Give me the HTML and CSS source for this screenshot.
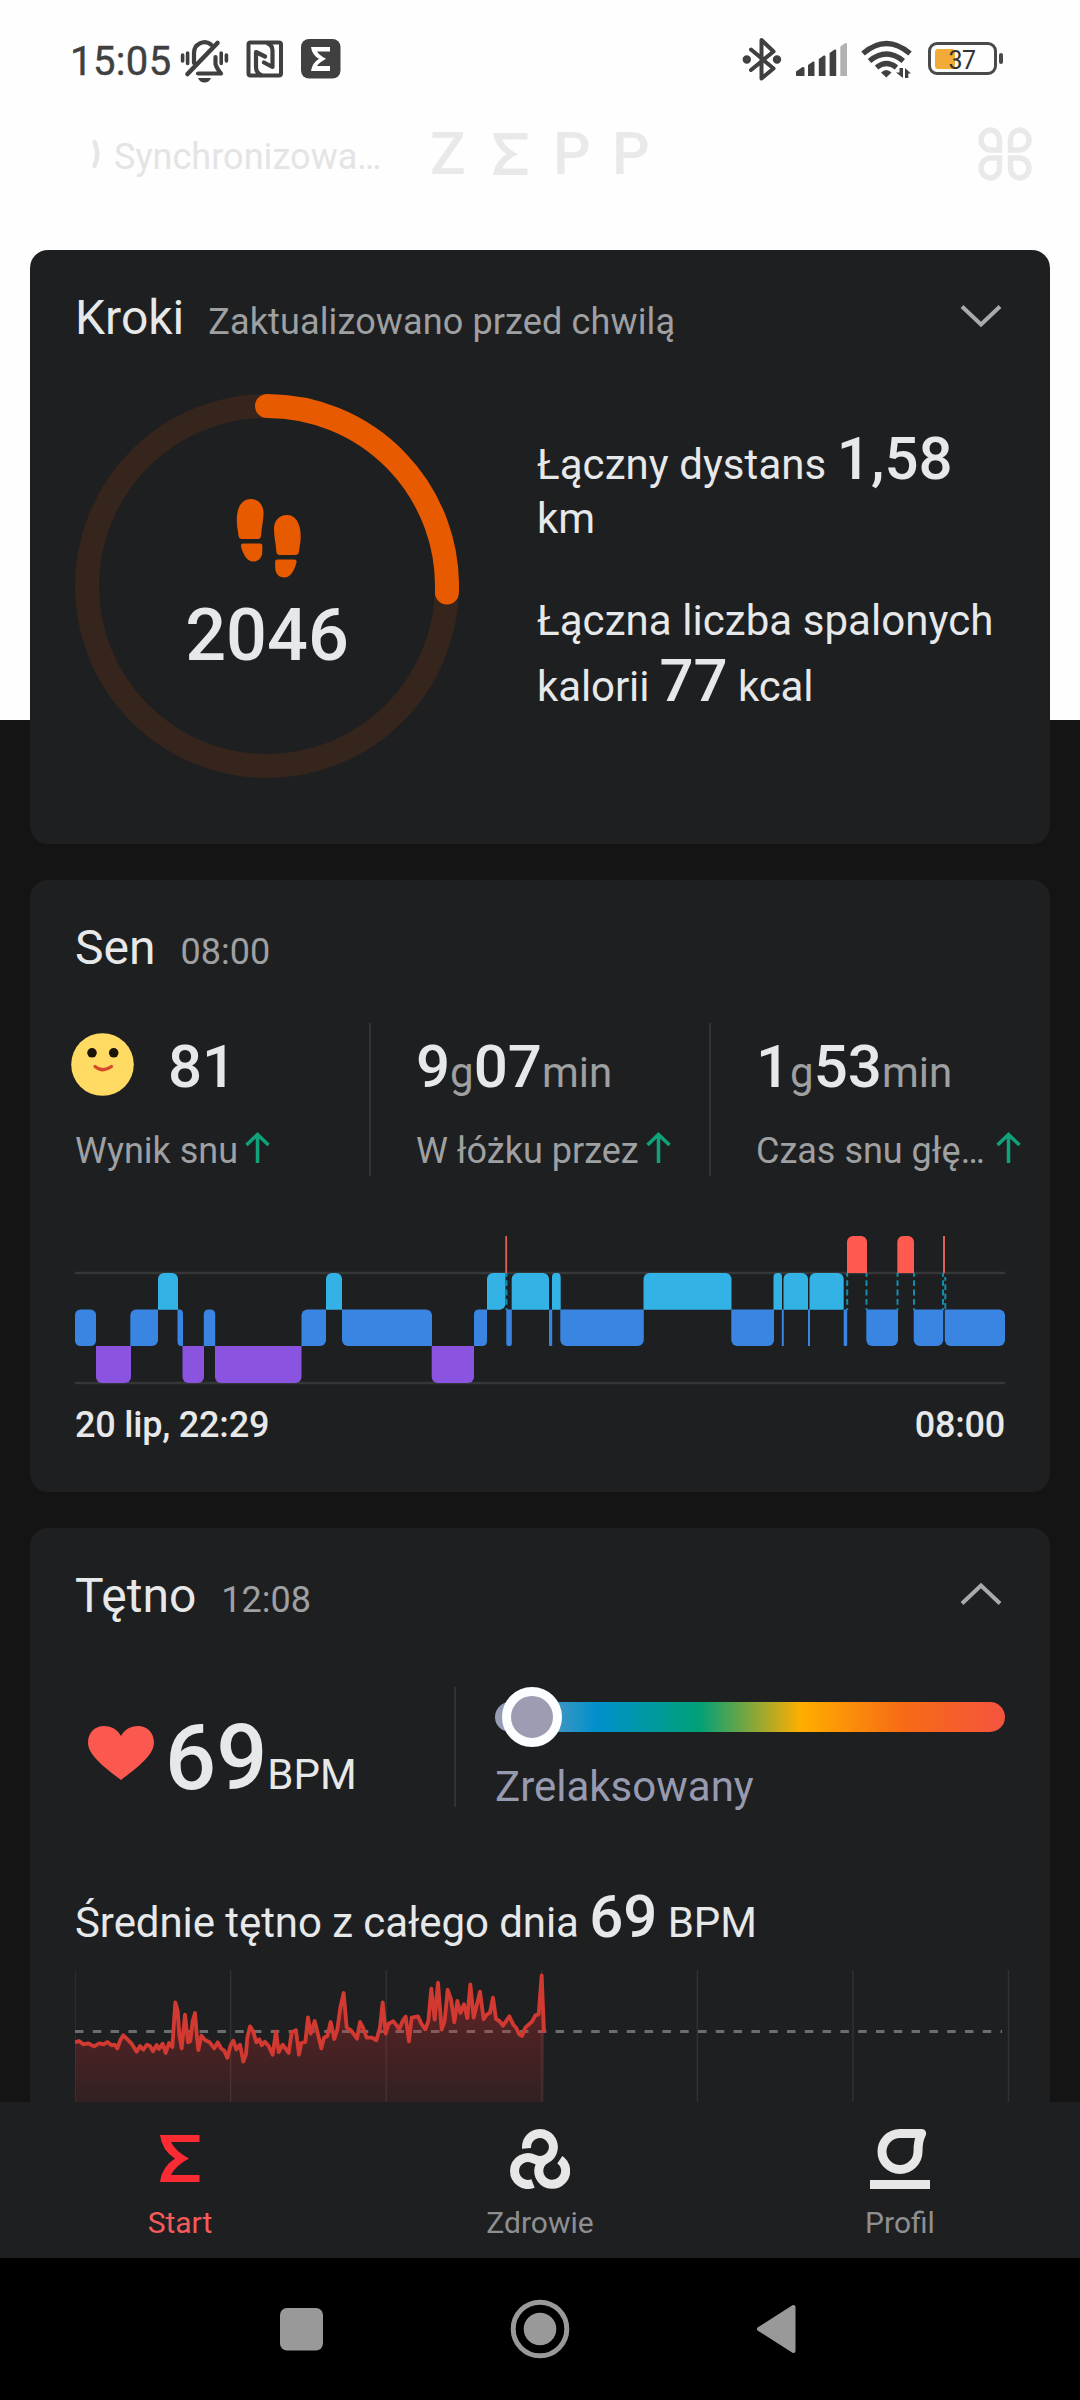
FILE: index.html
```html
<!DOCTYPE html>
<html lang="pl">
<head>
<meta charset="utf-8">
<title>Zepp</title>
<link rel="stylesheet" href="styles.css">
</head>
<body>
<div class="phone">
  <div class="status">
    <span class="clock">15:05</span>
    <svg class="ic-bell" width="50" height="46" viewBox="180 37 50 46" fill="none" stroke="#404040" stroke-width="3.6" stroke-linecap="round" stroke-linejoin="round">
      <path d="M182.6 55v6M187.6 53v10.500M226.400 55v6M221.200 53v10.500"/>
      <path stroke-width="4.200" d="M194 63V53a10.500 10.500 0 0 1 17-8.500M215.500 57v7q1 4 5.500 9.500h-23"/>
      <path stroke-width="4.600" d="M187.500 74L217.500 43"/>
      <path fill="#404040" stroke="none" d="M198 78h13q-2 4.500-6.500 4.500T198 78z"/>
    </svg>
    <svg class="ic-nfc" width="38" height="38" viewBox="0 0 38 38" fill="none" stroke="#404040" stroke-width="4" stroke-linejoin="round">
      <rect x="2.500" y="2.500" width="32.500" height="33" rx="2"/>
      <path stroke-width="4.200" stroke-linecap="round" d="M15 35q-5-2-5-8V12l9 4.500M22 3.500q4.500 2 4.500 7V27l-8.500-4.500"/>
    </svg>
    <svg class="ic-zepp" width="40" height="40" viewBox="0 0 40 40">
      <rect width="39.500" height="39.500" rx="8" fill="#404040"/>
      <path fill="#fff" d="M10 8h19v4.500H16q2 3.500 9 7.300-7 3.800-9 7.300h13v5H10q1-8 8-12.300Q11 16 10 8z"/>
    </svg>
    <span class="grow"></span>
    <svg width="40" height="44" viewBox="742 36 40 44" fill="none" stroke="#404040" stroke-width="4" stroke-linejoin="round" stroke-linecap="round">
      <path d="M751 48.500L773.500 67.500 761.500 77.500V39L773.500 50.500 751 69"/>
      <circle cx="746.800" cy="58.500" r="2.200"/><circle cx="777" cy="58.500" r="2.200"/>
    </svg>
    <svg class="ic-signal" width="53" height="36" viewBox="795 41 53 36" fill="#404040">
      <path d="M796 71.500l6.500-4.500q2 0 2 1V76H797q-1 0-1-1z"/><path d="M808 65l5-3.500q1.500-.5 1.500 1V76H808z"/><path d="M818.800 59l5-3.500q1.700-.5 1.700 1V76h-6.700z"/><path d="M829.600 53l5-3.500q1.600-.5 1.600 1V76h-6.600z"/><path fill="#b2b2b2" d="M840.300 46.500l5-3.500q1.700-.5 1.700 1V76h-6.700z"/>
    </svg>
    <svg class="ic-wifi" width="52" height="40" viewBox="860 39 52 40" fill="none" stroke="#404040" stroke-width="5.300">
      <path d="M863 53.500Q886.400 33.500 910 53.500"/><path d="M869.500 61Q886.400 47 903.300 61"/><path d="M876.500 67.500Q886.400 59.500 896.500 67.500"/>
      <path fill="#404040" stroke="none" d="M881 72.500q5.400-5 10.500 0l-5.200 5z"/>
      <path fill="#404040" stroke="none" d="M899.500 68h3.500v10l-7-5.500h3.500zM905 78h3.300v-4.500h2.700L905 68z"/>
    </svg>
    <div class="battery"><i></i><b>37</b></div><span class="nub"></span>
  </div>

  <div class="appbar">
    <div class="sync">
      <svg width="12" height="30" viewBox="0 0 12 30" fill="none" stroke="#e6e6e6" stroke-width="4.500" stroke-linecap="round"><path d="M3.500 3q5.500 12 0 24"/></svg>
      <span>Synchronizowa…</span>
    </div>
    <div class="logo">
      <span>Z</span>
      <svg width="35" height="42" viewBox="0 0 35 42" fill="#e9e9e9"><path d="M0 0h34.500v6.500H9q5 9.500 16 14.500Q14 26 9 35.500h25.500V42H0q2-14 13.500-21Q2 14 0 0z"/></svg>
      <span>P</span><span>P</span>
    </div>
    <svg width="54" height="54" viewBox="0 0 54 54" fill="none" stroke="#e9e9e9" stroke-width="5.500">
      <path id="petal" d="M13 3a10 10 0 1 0 0 20h8.500V13A9.500 10 0 0 0 13 3z"/>
      <use href="#petal" transform="translate(54 0) scale(-1 1)"/>
      <use href="#petal" transform="translate(0 54) scale(1 -1)"/>
      <use href="#petal" transform="translate(54 54) scale(-1 -1)"/>
    </svg>
  </div>

  <main>
    <section class="card steps">
      <header>
        <h2>Kroki</h2><small class="updated">Zaktualizowano przed chwilą</small>
        <svg class="chev" width="48" height="30" viewBox="0 0 48 30"><path d="M5 5.500L24 23.500 43 5.500"/></svg>
      </header>
      <div class="steps-body">
        <div class="ring">
          <svg class="ring-arc" width="384" height="384" viewBox="0 0 384 384" fill="none" stroke-width="24">
            <circle cx="192" cy="192" r="180" stroke="#36251d"/>
            <path d="M192 12A180 180 0 0 1 371.900 198.500" stroke="#e85a00" stroke-linecap="round"/>
          </svg>
          <svg class="feet" width="66" height="80" viewBox="0 0 66 80" fill="#e85a00">
            <path id="foot" d="M14.500 0C22 0 28 5.500 27.500 15 27 25 25.500 29 25.200 36q-.2 4-3.500 4H6Q3 40 2.600 37C1.800 31 .8 27 .8 21 .8 8 6 0 14.500 0z"/>
            <path id="heel" d="M7 44.600h17q2.300 0 2.300 2v6c0 6-3.500 10-9 10-6.500 0-10.600-8-12.300-15.300q-.5-2.700 2-2.700z"/>
            <use href="#foot" transform="translate(65.500 16) scale(-1 1)"/>
            <use href="#heel" transform="translate(65.500 16) scale(-1 1)"/>
          </svg>
          <div class="count">2046</div>
        </div>
        <div class="totals">
          <div class="big-line">Łączny dystans <b>1,58</b></div>
          <div class="line">km</div>
          <div class="line second">Łączna liczba spalonych</div>
          <div class="big-line kcal">kalorii <b>77</b> kcal</div>
        </div>
      </div>
    </section>

    <section class="card sleep">
      <header><h2>Sen</h2><small>08:00</small></header>
      <div class="metrics">
        <div class="metric score">
          <div class="value">
            <svg width="63" height="63" viewBox="0 0 63 63"><circle cx="31.500" cy="31.500" r="31.300" fill="#ffdb63"/><circle cx="21" cy="19.800" r="4.800" fill="#1b1508"/><circle cx="42.700" cy="19.800" r="4.800" fill="#1b1508"/><path d="M24 33.500q7.800 6.500 16.500 0" fill="none" stroke="#d44a2a" stroke-width="3.200" stroke-linecap="round"/></svg>
            <b>81</b>
          </div>
          <div class="label"><span>Wynik snu</span><svg class="up" width="25" height="32" viewBox="0 0 25 32"><path d="M12.500 31V3M1.500 13L12.500 2.500 23.500 13"/></svg></div>
        </div>
        <div class="metric">
          <div class="value-line"><b>9</b>g<b>07</b>min</div>
          <div class="label"><span>W łóżku przez</span><svg class="up" width="25" height="32" viewBox="0 0 25 32"><path d="M12.500 31V3M1.500 13L12.500 2.500 23.500 13"/></svg></div>
        </div>
        <div class="metric deep">
          <div class="value-line"><b>1</b>g<b>53</b>min</div>
          <div class="label"><span>Czas snu głę…</span><svg class="up" width="25" height="32" viewBox="0 0 25 32"><path d="M12.500 31V3M1.500 13L12.500 2.500 23.500 13"/></svg></div>
        </div>
      </div>
      <svg class="stages" width="930" height="160" viewBox="75 1230 930 160">
        <path d="M75 1273H1005M75 1383H1005" stroke="#353638" stroke-width="2.500"/>
        <g fill="#8a54e0">
          <path d="M96 1346h35v31a6 6 0 0 1-6 6h-23a6 6 0 0 1-6-6z"/><path d="M182.500 1346H204v31a6 6 0 0 1-6 6h-9.500a6 6 0 0 1-6-6z"/><path d="M215 1346h86.500v31a6 6 0 0 1-6 6H221a6 6 0 0 1-6-6z"/><path d="M431.700 1346H474v31a6 6 0 0 1-6 6h-30.300a6 6 0 0 1-6-6z"/>
        </g>
        <g fill="#3a85e2">
          <rect x="75" y="1309.500" width="21" height="36.500" rx="5.500"/>
          <path d="M136 1309.500h22V1340a6 6 0 0 1-6 6h-21.700v-30.500a6 6 0 0 1 5.700-6z"/>
          <path d="M177.500 1309.500h2.500q3 0 3 5V1346h-2q-3.500 0-3.500-5z"/>
          <path d="M208.800 1309.500h1.400q5 0 5 5V1346h-11.400v-31.500q0-5 5-5z"/>
          <path d="M307.500 1309.500H326V1340a6 6 0 0 1-6 6h-18.500v-30.500a6 6 0 0 1 6-6z"/>
          <path d="M342 1309.500h84a6 6 0 0 1 6 6V1346h-84a6 6 0 0 1-6-6z"/>
          <path d="M479 1309.500h8V1341q0 5-5 5h-8v-31.500q0-5 5-5z"/>
          <path d="M506.300 1309.500h5.500V1344q0 2-2 2h-1.500q-2 0-2-2z"/>
          <rect x="549" y="1309.500" width="3.200" height="36.500" rx="1"/>
          <path d="M560.300 1309.500h83.500V1340a6 6 0 0 1-6 6h-71.500a6 6 0 0 1-6-6z"/>
          <path d="M731.300 1309.500H774V1340a6 6 0 0 1-6 6h-30.700a6 6 0 0 1-6-6z"/>
          <path d="M781.800 1309.500h2v36.500h-2zM808 1309.500h2v36.500h-2z"/>
          <rect x="843.700" y="1309.500" width="3.500" height="36.500" rx="1"/>
          <path d="M866.300 1309.500H898V1340a6 6 0 0 1-6 6h-19.700a6 6 0 0 1-6-6z"/>
          <path d="M913.700 1309.500h29.500V1340a6 6 0 0 1-6 6h-17.500a6 6 0 0 1-6-6z"/>
          <path d="M944.800 1309.500H999a6 6 0 0 1 6 6V1340a6 6 0 0 1-6 6h-48.200a6 6 0 0 1-6-6z"/>
        </g>
        <g fill="#33b2e5">
          <path d="M164 1273h8a6 6 0 0 1 6 6v30.700h-20V1279a6 6 0 0 1 6-6z"/>
          <path d="M332 1273h4a6 6 0 0 1 6 6v30.700h-16V1279a6 6 0 0 1 6-6z"/>
          <path d="M493 1273h12.500v30.700a6 6 0 0 1-6 6H487V1279a6 6 0 0 1 6-6z"/>
          <path d="M517.700 1273H543a6 6 0 0 1 6 6v30.700h-37.300V1279a6 6 0 0 1 6-6z"/>
          <path d="M555.500 1273h2q3.200 0 3.200 5v31.700h-8.700V1277q0-4 3.500-4z"/>
          <path d="M649.500 1273h76a6 6 0 0 1 6 6v30.700h-88V1279a6 6 0 0 1 6-6z"/>
          <path d="M777.500 1273h1.500q3 0 3 4v32.700h-8.500V1277q0-4 4-4z"/>
          <path d="M789.500 1273H802a6 6 0 0 1 6 6v30.700h-24.500V1279a6 6 0 0 1 6-6z"/>
          <path d="M815.500 1273h22.200a6 6 0 0 1 6 6v30.700h-34.200V1279a6 6 0 0 1 6-6z"/>
        </g>
        <g fill="#ff5950">
          <path d="M853 1236h8a6 6 0 0 1 6 6v31h-20v-31a6 6 0 0 1 6-6z"/><path d="M903 1236h5a6 6 0 0 1 6 6v31h-16.700v-31a6 6 0 0 1 5.700-6z"/>
          <path fill="#dc6258" d="M505.300 1236h1.800v37h-1.800zM943 1236h2v37h-2z"/>
        </g>
        <path d="M506.500 1273v37M847.200 1273v37M866.500 1273v37M897.500 1273v37M914 1273v37M943 1273v37M945.300 1277v33" stroke="#148cac" stroke-width="2" stroke-dasharray="5.800 3.500" stroke-dashoffset="2"/>
      </svg>
      <div class="times"><span>20 lip, 22:29</span><span>08:00</span></div>
    </section>

    <section class="card heart">
      <header>
        <h2>Tętno</h2><small>12:08</small>
        <svg class="chev" width="48" height="30" viewBox="0 0 48 30"><path d="M5 24.500L24 6.500 43 24.500"/></svg>
      </header>
      <div class="pulse">
        <div class="now">
          <svg width="66" height="54" viewBox="0 0 66 54" fill="#fb5850"><path d="M33 54C22 45 0 31 0 16.500 0 6.500 7 0 16 0c7.500 0 13.500 3.500 17 10C36.500 3.500 42.500 0 50 0c9 0 16 6.500 16 16.500C66 31 44 45 33 54z"/></svg>
          <div class="bpm"><b>69</b>BPM</div>
        </div>
        <div class="zone">
          <div class="scale"><i></i></div>
          <div class="zone-name">Zrelaksowany</div>
        </div>
      </div>
      <div class="big-line average">Średnie tętno z całego dnia <b>69</b> BPM</div>
      <svg class="trend" width="940" height="133" viewBox="75 1968 940 133">
        <defs><linearGradient id="area" gradientUnits="userSpaceOnUse" x1="0" y1="300" x2="0" y2="695"><stop offset="0" stop-color="#cc2b2b" stop-opacity=".42"/><stop offset="1" stop-color="#cc2b2b" stop-opacity=".11"/></linearGradient></defs>
        <path d="M75 1969v132M230.600 1969v132M386.200 1969v132M541.700 1969v132M697.300 1969v132M853 1969v132M1008.500 1969v132" stroke="#303234" stroke-width="1.500"/>
        <path d="M75 2030.500H1002" stroke="#6c6d6f" stroke-width="3" stroke-dasharray="8.500 9.300"/>
        <g transform="translate(60 1870) scale(.33333)">
          <path fill="url(#area)" d="M45 514L57 510 70 520 85 517 102 526 118 517 131 520 142 513 155 523 164 521 172 532 181 507 190 493 200 503 214 517 230 542 240 525 250 536 261 521 270 525 279 541 290 522 297 534 308 518 317 546 327 516 337 528 346 394 353 420 358 490 365 532 375 431 384 514 391 510 398 450 405 426 411 500 415 537 424 494 436 508 449 514 463 532 473 514 484 533 492 538 502 560 512 522 520 509 529 535 540 521 550 572 558 550 562 500 570 466 579 480 589 514 598 505 605 523 614 512 626 525 638 551 648 481 656 543 668 521 676 532 686 546 695 484 708 478 717 551 724 516 736 513 744 439 752 488 764 450 773 486 784 532 792 500 802 495 812 453 823 504 832 475 841 410 851 366 860 470 873 478 891 503 900 453 909 470 920 500 936 500 949 508 960 470 968 394 977 488 986 458 1000 451 1018 474 1028 450 1037 437 1047 511 1055 440 1074 436 1084 458 1096 475 1105 450 1114 353 1124 446 1134 335 1145 476 1154 450 1163 356 1173 385 1183 454 1192 390 1201 426 1212 400 1222 441 1231 340 1241 440 1251 400 1260 362 1271 445 1280 431 1290 425 1299 380 1308 444 1318 450 1329 464 1348 436 1360 461 1368 470 1378 490 1386 495 1396 470 1416 452 1426 433 1436 430 1445 313 1452 485V695H45z"/>
          <path fill="none" stroke="#d23a31" stroke-width="11.500" stroke-linejoin="round" d="M45 514L57 510 70 520 85 517 102 526 118 517 131 520 142 513 155 523 164 521 172 532 181 507 190 493 200 503 214 517 230 542 240 525 250 536 261 521 270 525 279 541 290 522 297 534 308 518 317 546 327 516 337 528 346 394 353 420 358 490 365 532 375 431 384 514 391 510 398 450 405 426 411 500 415 537 424 494 436 508 449 514 463 532 473 514 484 533 492 538 502 560 512 522 520 509 529 535 540 521 550 572 558 550 562 500 570 466 579 480 589 514 598 505 605 523 614 512 626 525 638 551 648 481 656 543 668 521 676 532 686 546 695 484 708 478 717 551 724 516 736 513 744 439 752 488 764 450 773 486 784 532 792 500 802 495 812 453 823 504 832 475 841 410 851 366 860 470 873 478 891 503 900 453 909 470 920 500 936 500 949 508 960 470 968 394 977 488 986 458 1000 451 1018 474 1028 450 1037 437 1047 511 1055 440 1074 436 1084 458 1096 475 1105 450 1114 353 1124 446 1134 335 1145 476 1154 450 1163 356 1173 385 1183 454 1192 390 1201 426 1212 400 1222 441 1231 340 1241 440 1251 400 1260 362 1271 445 1280 431 1290 425 1299 380 1308 444 1318 450 1329 464 1348 436 1360 461 1368 470 1378 490 1386 495 1396 470 1416 452 1426 433 1436 430 1445 313 1452 485"/>
        </g>
      </svg>
    </section>
  </main>

  <nav class="tabs">
    <a class="active"><svg width="60" height="60" viewBox="0 0 60 60" fill="#fb2b33"><path d="M10 6h39.500v7H21q4 9 18 16.500Q25 37 21 46h28.500v7H10q2-15.500 15-23.500Q12 21.500 10 6z"/></svg><span>Start</span></a>
    <a><svg width="60" height="60" viewBox="0 0 180 180" fill="none" stroke="#e7e7e8" stroke-width="27"><path d="M49.700 58A40.300 40.300 0 1 1 108 90A40.300 40.300 0 1 0 149.500 92.500"/><path d="M69 163.500A40.300 40.300 0 1 1 72 90A40.300 40.300 0 0 0 108 90"/></svg><span>Zdrowie</span></a>
    <a><svg width="60" height="60" viewBox="0 0 180 180"><path d="M155 13.500H90A54 54 0 1 0 144 68C144 45 147 28 155 13.500z" fill="none" stroke="#e7e7e8" stroke-width="27" stroke-linejoin="round"/><path d="M0 153h180v27H0z" fill="#e7e7e8"/></svg><span>Profil</span></a>
  </nav>

  <div class="sysnav">
    <svg width="44" height="43" viewBox="0 0 44 43"><rect width="43" height="42.500" rx="7" fill="#999"/></svg>
    <svg width="60" height="60" viewBox="0 0 60 60"><circle cx="30" cy="30" r="26.800" fill="none" stroke="#999" stroke-width="5"/><circle cx="30" cy="30" r="16.300" fill="#999"/></svg>
    <svg width="41" height="50" viewBox="0 0 41 50"><path d="M37.500 3v44L3 25z" fill="#999" stroke="#999" stroke-width="4" stroke-linejoin="round"/></svg>
  </div>
</div>
</body>
</html>
```

FILE: styles.css
```css
* { box-sizing: border-box; }
body { margin: 0; font-family: Roboto, "Liberation Sans", sans-serif; }
b { font-weight: 500; }
svg { display: block; flex: none; }

.phone {
  width: 1080px;
  height: 2400px;
  display: flex;
  flex-direction: column;
  overflow: hidden;
  background: linear-gradient(#fefefe 720px, #141414 720px);
}

/* status bar */
.status {
  height: 117px;
  display: flex;
  align-items: center;
  padding: 0 77px 0 70px;
  color: #404040;
}
.clock { font-size: 40px; line-height: 50px; padding-top: 6px; width: 110px; white-space: nowrap; letter-spacing: .4px; -webkit-text-stroke: .4px #404040; }
.ic-bell { margin-top: 3px; }
.ic-nfc { margin-left: 16px; }
.ic-zepp { margin-left: 17px; }
.grow { flex: 1; }
.ic-signal { margin-left: 13px; }
.ic-wifi { margin-left: 12px; }
.battery {
  width: 69px;
  height: 33px;
  margin-left: 16px;
  border: 3.500px solid #4a4a4a;
  border-radius: 9px;
  display: flex;
  align-items: center;
  padding-left: 3.500px;
}
.battery i { width: 20px; height: 20px; border-radius: 3px; background: #f3ab38; }
.battery b { font-size: 25px; line-height: 30px; font-weight: 400; margin: 4px 0 0 -6px; color: #333; letter-spacing: -.5px; }
.nub { width: 4px; height: 11px; border-radius: 2px; margin-left: 2px; background: #4a4a4a; }

/* app bar */
.appbar {
  height: 73px;
  display: grid;
  grid-template-columns: 341px 546px auto;
  align-items: center;
  padding-left: 91px;
}
.sync { display: flex; align-items: center; gap: 11px; font-size: 36px; color: #e4e4e4; letter-spacing: .05px; }
.sync span { padding-top: 7px; }
.logo { display: flex; align-items: center; color: #e9e9e9; font-size: 59px; line-height: 60px; font-weight: 500; padding-top: 1px; }
.logo span:first-child { width: 61px; text-indent: -2px; }
.logo svg { margin-right: 25px; }
.logo span + span, .logo svg + span { width: 59px; }

/* cards */
main {
  flex: 1;
  min-height: 0;
  overflow: hidden;
  padding: 60px 30px 0;
  display: flex;
  flex-direction: column;
  gap: 36px;
}
.card {
  flex: none;
  border-radius: 18px;
  background: #1e1f21;
  color: #e7e8e9;
  padding: 40px 45px 0;
  font-size: 42px;
}
.card header { display: flex; align-items: baseline; height: 56px; line-height: 56px; }
.card h2 { margin: 0; font-size: 48px; font-weight: 400; }
.card small { font-size: 36px; color: #9fa0a1; margin-left: 25px; }
.steps .updated { letter-spacing: .13px; margin-left: 24px; }
.chev { margin-left: auto; align-self: center; margin-top: -4px; fill: none; stroke: #a9aaab; stroke-width: 4; }
.steps { height: 594px; }
.sleep { height: 612px; }
.heart { height: 700px; }

.steps-body { display: flex; gap: 78px; margin-top: 48px; }
.ring { width: 384px; height: 384px; display: grid; justify-items: center; align-content: start; }
.ring > * { grid-column: 1; }
.ring-arc { grid-row: 1 / 4; }
.ring { grid-template-rows: 105px 95px 184px; }
.feet { grid-row: 2; margin-left: 3px; }
.count { grid-row: 3; font-size: 72px; font-weight: 500; line-height: 84px; }
.totals { padding-top: 31px; white-space: nowrap; letter-spacing: .06px; }
.big-line { height: 68px; line-height: 68px; white-space: nowrap; }
.big-line b { font-size: 60px; }
.kcal { letter-spacing: -.1px; }
.line { height: 52px; line-height: 52px; }
.second { margin-top: 50px; }

/* sleep metrics */
.metrics { display: grid; grid-template-columns: 341px 340px 339px; margin: 47px -45px 0; height: 150px; }
.metric { padding: 10px 0 0 45px; white-space: nowrap; border-right: 2px solid #313335; }
.metric:last-child { border-right: 0; }
.value { height: 68px; display: flex; align-items: flex-start; gap: 34px; margin-left: -4px; }
.value b, .value-line b { font-size: 60px; line-height: 68px; color: #e7e8e9; }
.value-line { height: 68px; line-height: 68px; color: #9fa0a1; }
.label { display: flex; gap: 7px; height: 50px; margin-top: 25px; line-height: 50px; font-size: 36px; color: #9fa0a1; }
.deep .label { gap: 11px; }
.up { margin-top: 6px; fill: none; stroke: #10a37b; stroke-width: 3.500; }
.stages { margin-top: 57px; }
.times { display: flex; justify-content: space-between; margin-top: 10px; font-size: 36px; font-weight: 500; line-height: 50px; letter-spacing: -.2px; }

/* heart rate */
.pulse { display: flex; height: 120px; margin-top: 63px; }
.now { width: 381px; border-right: 2px solid #313335; display: flex; padding-left: 13px; gap: 11px; }
.now svg { margin-top: 39px; }
.bpm { height: 100px; line-height: 100px; margin-top: 22px; white-space: nowrap; }
.bpm b { font-size: 90px; }
.zone { margin-left: 39px; width: 510px; }
.scale {
  height: 30px;
  margin-top: 15px;
  border-radius: 15px;
  display: flex;
  align-items: center;
  padding-left: 7px;
  background: linear-gradient(90deg, #9c9db2, #0090cc 20%, #00a078 40%, #ffae00 60%, #f76b15 80%, #f5533f);
}
.scale i { width: 60px; height: 60px; flex: none; border-radius: 50%; border: 9px solid #fcfdff; background: #9c9db2; }
.zone-name { margin-top: 29px; line-height: 52px; color: #989ab0; }
.average { margin-top: 76px; letter-spacing: -.07px; }
.trend { margin-top: 18px; }

/* bottom navigation */
.tabs { height: 156px; background: #1e1f21; display: grid; grid-template-columns: repeat(3, 1fr); }
.tabs a { display: flex; flex-direction: column; align-items: center; padding-top: 27px; gap: 14px; font-size: 30px; line-height: 40px; color: #8e8f90; }
.tabs .active { color: #f55b59; }
.sysnav { height: 142px; background: #000; display: flex; align-items: center; padding-left: 280px; gap: 186px; }
```
